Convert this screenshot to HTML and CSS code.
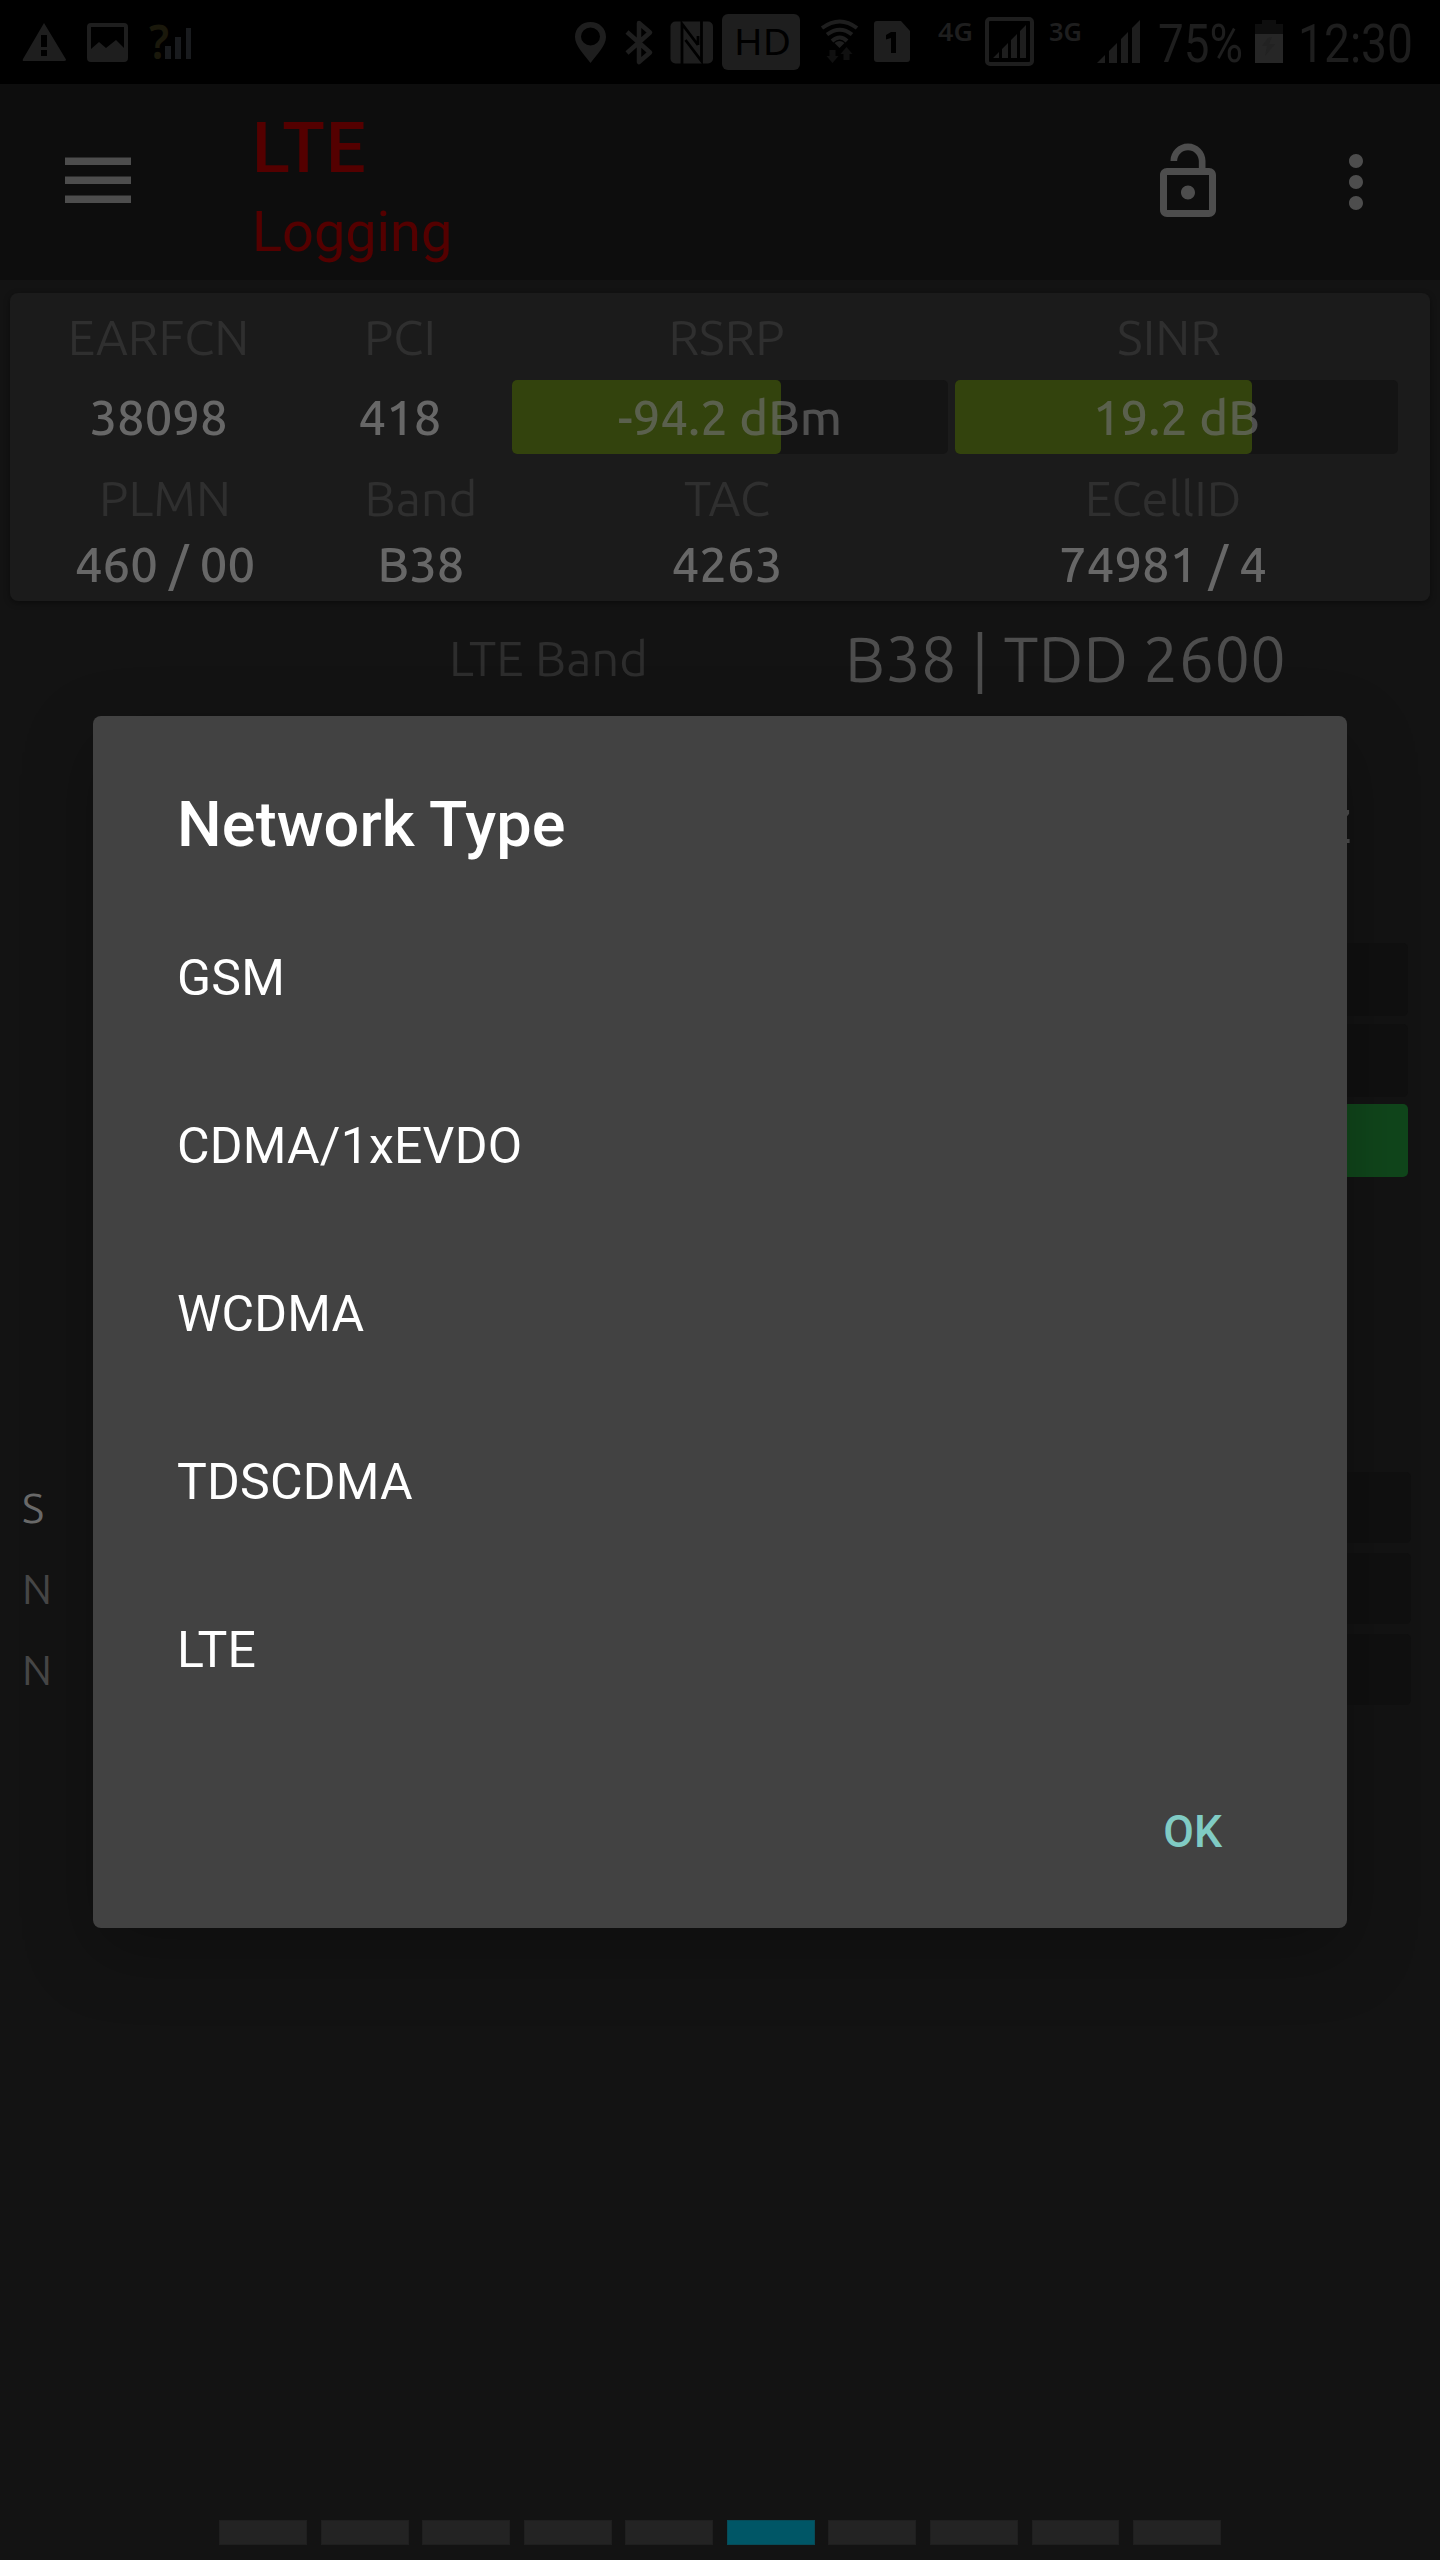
FILE: index.html
```html
<!DOCTYPE html>
<html lang="en">
<head>
<meta charset="utf-8">
<title>Network Type</title>
<link rel="stylesheet" href="styles.css">
</head>
<body>
<div class="screen">
  <div class="statusbar">
    <svg class="status-left" width="220" height="84" viewBox="0 0 220 84">
      <path class="ic" fill-rule="evenodd" d="M44 23 66 59.500Q66 61 64 61H24Q22 61 23 59ZM41 35V47H47V35ZM41 50V56H47V50Z"/>
      <path class="ic" fill-rule="evenodd" d="M91 23H124Q128 23 128 27V58Q128 62 124 62H91Q87 62 87 58V27Q87 23 91 23ZM91 27V49L99 42 106 48 116 40 124 48V27Z"/>
      <text class="query" x="149" y="59" textLength="20" lengthAdjust="spacingAndGlyphs">?</text>
      <path class="ic-blue" d="M165 46H171V59H165ZM175 37H181V59H175ZM186 28H191V59H186Z"/>
    </svg>
    <svg class="status-right" width="880" height="84" viewBox="560 0 880 84">
      <path class="ic" fill-rule="evenodd" d="M590.500 22C582 22 575 28 575 37C575 46 584 54 590.500 63C597 54 606 46 606 37C606 28 599 22 590.500 22ZM590.500 27.500A9.500 9 0 1 1 590.500 45.500A9.500 9 0 1 1 590.500 27.500Z"/>
      <path class="line" d="M627 32 650 52.500 639 62V23L650 32.500 627 53"/>
      <rect class="ic" x="670.500" y="21.500" width="42.500" height="42" rx="5"/>
      <path class="cut-line" d="M682 64V24L698 45M698 45V36M701.500 21V61L685.500 40"/>
      <rect class="ic" x="722" y="14" width="78" height="56" rx="6"/>
      <text class="hd" x="734" y="54.500" textLength="57" lengthAdjust="spacingAndGlyphs">HD</text>
      <path class="arc" d="M822 28Q840 15 857 28M827 34.500Q840 25 852 34.500M832 41Q840 34 847 41"/>
      <path class="ic" d="M839.500 48 834.500 43Q839.500 39 844.500 43Z"/>
      <path class="ic-dim" d="M829.500 50H835.500V56H838.500L832.500 63 826.500 56H829.500ZM843.500 60H849.500V54H852.500L846.500 47 840.500 54H843.500Z"/>
      <path class="ic" d="M877 21H901L910 31V59Q910 62 907 62H877Q874 62 874 59V24Q874 21 877 21Z"/>
      <path class="cut" d="M891 32H896V53H891V38L886 39.500V35Z"/>
      <text class="net" x="938" y="41" textLength="35" lengthAdjust="spacingAndGlyphs">4G</text>
      <rect class="frame" x="987" y="19" width="45" height="45" rx="3"/>
      <path class="ic" d="M993 58 999 52V58ZM1002 58V49L1008 43V58ZM1011 58V40L1017 34V58ZM1020 58V31L1026 25V58Z"/>
      <text class="net" x="1049" y="41" textLength="33" lengthAdjust="spacingAndGlyphs">3G</text>
      <path class="ic" d="M1097 63 1105 55V63ZM1109 63V51L1117 43V63ZM1121 63V39L1128 32V63ZM1132 63V28L1140 20V63Z"/>
      <text class="clock" x="1158" y="62" textLength="85" lengthAdjust="spacingAndGlyphs">75%</text>
      <path class="bat-top" d="M1262 20H1276V24H1283V35H1255V24H1262Z"/>
      <path class="bat" d="M1255 34H1283V63H1255Z"/>
      <path class="bolt" d="M1268 38 1262 46H1267L1265 56 1275 44H1269L1272 37Z"/>
      <text class="clock" x="1298" y="62" textLength="115" lengthAdjust="spacingAndGlyphs">12:30</text>
    </svg>
  </div>

  <header class="appbar">
    <svg class="menu" width="66" height="46" viewBox="0 0 66 46"><path d="M0 .5H66V8H0ZM0 19.500H66V27H0ZM0 38.500H66V46H0Z"/></svg>
    <div class="titles">
      <h1>LTE</h1>
      <p>Logging</p>
    </div>
    <svg class="lock" width="84" height="84" viewBox="0 0 24 24"><path d="M12 17c1.100 0 2-.9 2-2s-.9-2-2-2-2 .9-2 2 .9 2 2 2zm6-9h-1V6c0-2.760-2.240-5-5-5S7 3.240 7 6h1.900c0-1.710 1.390-3.100 3.100-3.100 1.710 0 3.100 1.390 3.100 3.100v2H6c-1.100 0-2 .9-2 2v10c0 1.100.9 2 2 2h12c1.100 0 2-.9 2-2V10c0-1.100-.9-2-2-2zm0 12H6V10h12v10z"/></svg>
    <svg class="more" width="84" height="84" viewBox="0 0 24 24"><path d="M12 8c1.100 0 2-.9 2-2s-.9-2-2-2-2 .9-2 2 .9 2 2 2zm0 2c-1.100 0-2 .9-2 2s.9 2 2 2 2-.9 2-2-.9-2-2-2zm0 6c-1.100 0-2 .9-2 2s.9 2 2 2 2-.9 2-2-.9-2-2-2z"/></svg>
  </header>

  <section class="card">
    <div class="row labels-a"><span>EARFCN</span><span>PCI</span><span>RSRP</span><span>SINR</span></div>
    <div class="row values-a">
      <span>38098</span><span>418</span>
      <div class="meter meter-rsrp"><i style="width:61.700%"></i><b>-94.2 dBm</b></div>
      <div class="meter meter-sinr"><i style="width:67%"></i><b>19.2 dB</b></div>
    </div>
    <div class="row labels-b"><span>PLMN</span><span>Band</span><span>TAC</span><span>ECellID</span></div>
    <div class="row values-b"><span>460 / 00</span><span>B38</span><span>4263</span><span>74981 / 4</span></div>
  </section>

  <div class="band"><span class="band-label">LTE Band</span><span class="band-value">B38 | TDD 2600</span></div>
  <div class="bandwidth">MHz</div>
  <div class="bars"><div></div><div></div><div class="on"></div></div>
  <div class="cells">
    <div class="cell"><span class="serving">S</span><div></div></div>
    <div class="cell"><span>N</span><div></div></div>
    <div class="cell"><span>N</span><div></div></div>
  </div>

  <div class="pager"><i></i><i></i><i></i><i></i><i></i><i class="active"></i><i></i><i></i><i></i><i></i></div>

  <div class="dialog" role="dialog">
    <h2>Network Type</h2>
    <ul><li>GSM</li><li>CDMA/1xEVDO</li><li>WCDMA</li><li>TDSCDMA</li><li>LTE</li></ul>
    <div class="actions"><button>OK</button></div>
  </div>
</div>
</body>
</html>
```
FILE: styles.css
```css
* { box-sizing: border-box; margin: 0; padding: 0; }
body { background: #131313; font-family: "Ubuntu", "Noto Sans", sans-serif; font-weight: 450; }
.screen { position: relative; width: 1440px; height: 2560px; overflow: hidden; background: #131313; display: flex; flex-direction: column; }

.statusbar { height: 84px; flex: none; background: #000; display: flex; justify-content: space-between; }
.ic { fill: #1e1e1e; }
.ic-blue { fill: #191b1e; }
.ic-dim { fill: #101010; }
.cut { fill: #000; }
.cut-line { fill: none; stroke: #000; stroke-width: 2.800; }
.line { fill: none; stroke: #1e1e1e; stroke-width: 4.500; stroke-linejoin: round; }
.arc { fill: none; stroke: #1e1e1e; stroke-width: 4; }
.frame { fill: none; stroke: #1e1e1e; stroke-width: 4; }
.query { fill: #1a180b; font: 600 47px "Noto Sans", sans-serif; }
.hd { fill: #000; font: 400 36px "Noto Sans", sans-serif; }
.net { fill: #1e1e1e; font: 600 25px "Noto Sans", sans-serif; }
.clock { fill: #1e1e1e; font: 400 53.500px Roboto, sans-serif; }
.bat-top { fill: #0e0e0e; }
.bat { fill: #262626; }
.bolt { fill: #222; }

.appbar { height: 196px; flex: none; background: #0d0d0d; display: flex; align-items: flex-start; padding: 23px 42px 0 65px; font-family: Roboto, sans-serif; color: #540000; }
.appbar svg { fill: #4d4d4d; flex: none; }
.menu { margin-top: 50px; }
.titles { margin-left: 121px; flex: 1; }
.titles h1 { font-size: 70px; font-weight: 500; line-height: 82px; letter-spacing: 1px; }
.titles p { font-size: 56px; font-weight: 400; line-height: 86px; letter-spacing: -.1px; }
.lock { margin-top: 33px; }
.more { margin: 33px 0 0 84px; }

.card { flex: none; margin: 13px 10px 0; height: 308px; border-radius: 8px; background: #1b1b1b; box-shadow: 0 2px 6px rgba(0,0,0,.4); font-size: 49px; }
.row { display: grid; text-align: center; white-space: nowrap; }
.labels-a, .labels-b { color: #2f2f2f; }
.labels-a { grid-template-columns: 297px 186px 467px 418px; line-height: 87px; }
.values-a { grid-template-columns: 297px 186px 455px 450px; height: 74px; line-height: 73px; }
.labels-b, .values-b { grid-template-columns: 310px 202px 410px 462px; }
.labels-b { height: 86px; line-height: 87px; }
.values-b { line-height: 47px; }
.values-a, .values-b { color: #676767; font-weight: 500; }
.meter { display: grid; height: 74px; border-radius: 5px; background: #141414; color: rgba(112,112,112,.65); }
.meter-rsrp { margin-left: 19px; }
.meter-sinr { margin-left: 7px; }
.meter i, .meter b { grid-area: 1 / 1; }
.meter i { height: 74px; background: #33430d; border-radius: 5px; }
.meter b { font-weight: 470; }

.band { flex: none; height: 114px; display: grid; grid-template-columns: 345px 689px; padding-left: 376px; line-height: 113px; text-align: center; white-space: nowrap; }
.band-label { font-size: 49px; color: #2d2d2d; }
.band-value { font-size: 63px; color: #4d4d4d; line-height: 115px; letter-spacing: .25px; }
.bandwidth { flex: none; height: 208px; line-height: 209px; padding-right: 88px; text-align: right; font-size: 63px; color: #4d4d4d; }
.bars { flex: none; margin: 20px 32px 0 580px; display: grid; gap: 7.500px; }
.bars div { height: 73px; border-radius: 5px; background: #101010; }
.bars .on { background: #10461b; }
.cells { flex: none; margin: 295px 29px 0 22px; display: grid; gap: 11px; }
.cell { display: grid; grid-template-columns: 400px 1fr; height: 70px; line-height: 71px; font-size: 42px; color: #474747; }
.cell .serving { color: #6a6a6a; }
.cell div { border-radius: 5px; background: #101010; }

.pager { display: flex; gap: 13.600px; width: 1002px; margin: auto auto 15px; }
.pager i { flex: 1; height: 25px; background: #232323; border: 1px solid #1f1f1f; }
.pager .active { background: #005666; border-color: #074b57; }

.dialog { position: absolute; left: 93px; top: 716px; width: 1254px; height: 1212px; padding: 60px 85px 0 84px; border-radius: 8px; background: #424242; color: #fff; font-family: Roboto, sans-serif; box-shadow: 0 24px 70px rgba(0,0,0,.25); }
.dialog h2 { font-size: 63px; line-height: 97px; font-weight: 500; letter-spacing: .1px; margin-bottom: 21px; }
.dialog ul { list-style: none; }
.dialog li { height: 168px; line-height: 168px; font-size: 50px; font-weight: 400; letter-spacing: .2px; }
.actions { height: 195px; display: flex; justify-content: flex-end; align-items: center; padding-right: 40px; }
.actions button { background: none; border: 0; color: #80cbc4; font: 500 44.500px Roboto, sans-serif; }
```
